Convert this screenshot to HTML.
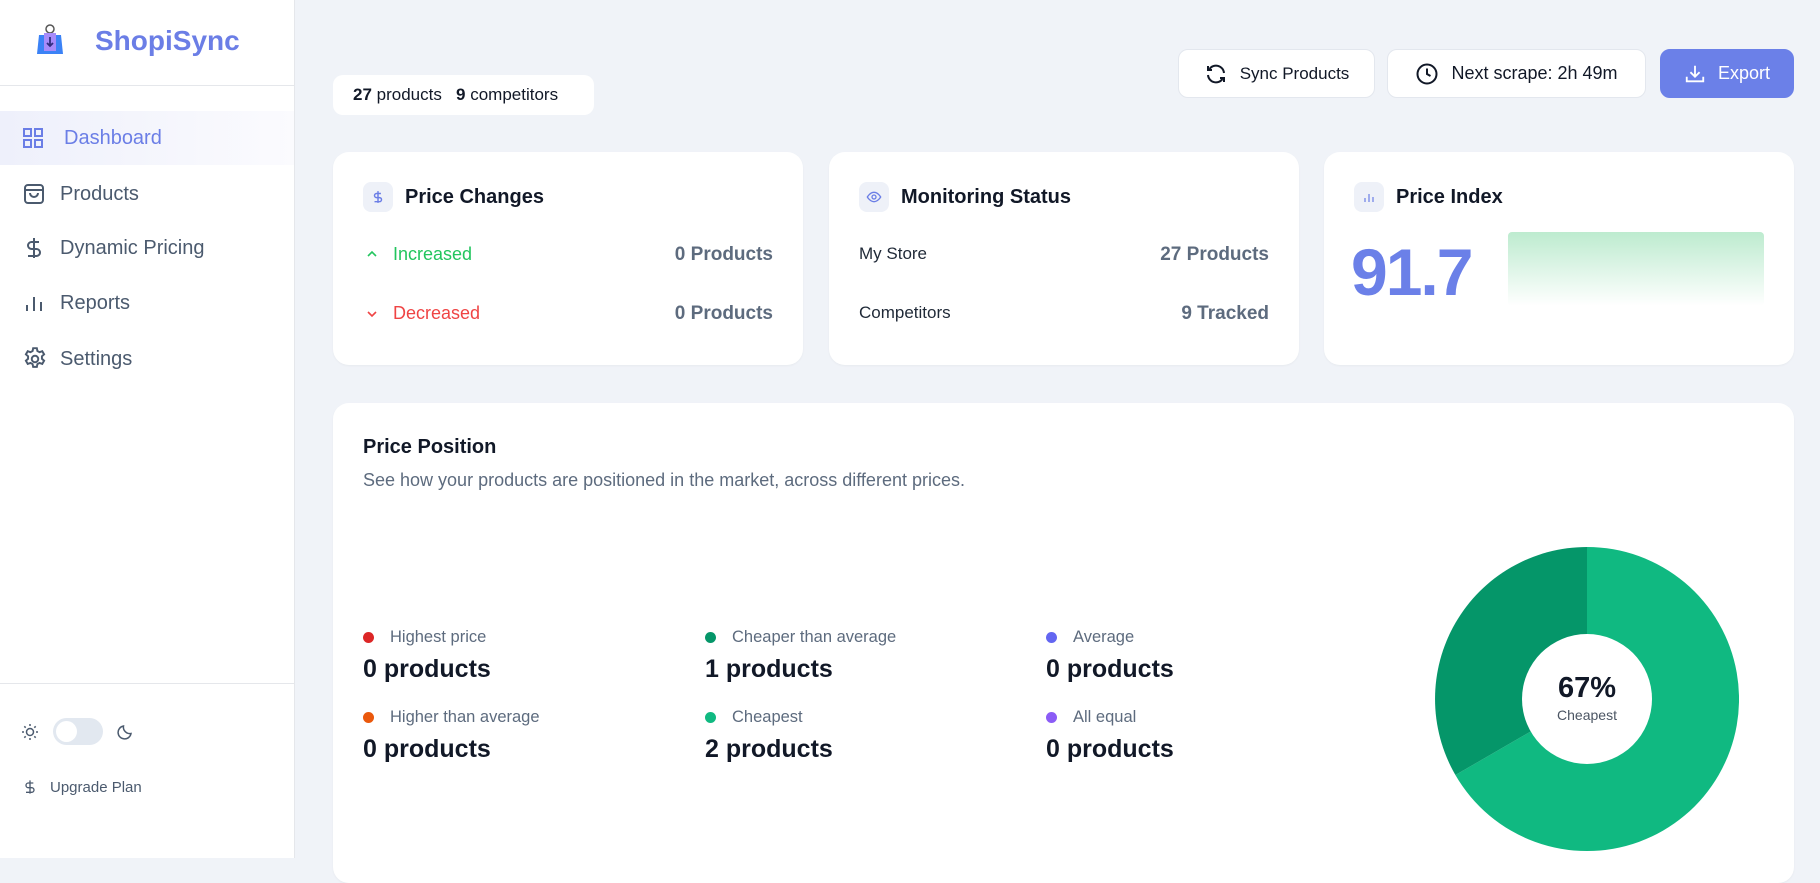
<!DOCTYPE html>
<html><head><meta charset="utf-8"><style>
*{box-sizing:border-box;margin:0;padding:0}
body{width:1820px;height:858px;overflow:hidden;background:#f0f3f8;font-family:"Liberation Sans",sans-serif;position:relative;color:#111827}
.abs{position:absolute}
.side{left:0;top:0;width:295px;height:858px;background:#fff;border-right:1px solid #e5e7eb}
.nav{position:absolute;left:0;width:294px;height:54px;display:flex;align-items:center;font-size:20px;color:#4b5a6e}
.nav svg{position:absolute;left:22px}
.nav span{position:absolute;left:60px}
.card{position:absolute;background:#fff;border-radius:16px;box-shadow:0 1px 2px rgba(0,0,0,.04)}
.btn{position:absolute;top:49px;height:49px;background:#fff;border:1px solid #e3e7ee;border-radius:10px;display:flex;align-items:center;justify-content:center;font-size:17px;color:#111827;gap:12px}
.ic{position:absolute;width:30px;height:30px;border-radius:8px;background:#eef1f8;display:flex;align-items:center;justify-content:center}
.ct{position:absolute;font-size:20px;font-weight:bold;color:#111827}
.row{position:absolute;font-size:18px}
.val{position:absolute;right:30px;font-size:19px;font-weight:bold;color:#5d6b7e}
.lg{position:absolute;font-size:16.5px;color:#5d6b7e}
.lg i{position:absolute;left:0;top:4px;width:11px;height:11px;border-radius:50%}
.lg span{position:absolute;left:27px;white-space:nowrap}
.lv{position:absolute;font-size:25px;font-weight:bold;color:#111827;white-space:nowrap}
</style></head><body>
<div class="abs side">
  <svg class="abs" style="left:36px;top:22px" width="28" height="34" viewBox="0 0 28 34"><circle cx="14" cy="7" r="4" fill="none" stroke="#555" stroke-width="1.5"/><path d="M3 13h22l2 19H1z" fill="#3b82f6"/><path d="M8 11h12v18H8z" fill="#a78bfa"/><path d="M14 15v9m-3-3l3 3 3-3" stroke="#312e81" stroke-width="1.8" fill="none"/></svg>
  <div class="abs" style="left:95px;top:25px;font-size:28px;font-weight:bold;color:#6b7ee6">ShopiSync</div>
  <div class="abs" style="left:0;top:85px;width:294px;height:1px;background:#e5e7eb"></div>
  <div class="nav" style="top:111px;background:linear-gradient(90deg,#eef0fb,#fbfbfe);color:#6b7ee6">
    <svg width="22" height="22" viewBox="0 0 22 22" fill="none" stroke="#6b7ee6" stroke-width="2"><rect x="2" y="2" width="7" height="7"/><rect x="13" y="2" width="7" height="7"/><rect x="2" y="13" width="7" height="7"/><rect x="13" y="13" width="7" height="7"/></svg>
    <span style="left:64px">Dashboard</span></div>
  <div class="nav" style="top:167px"><svg width="24" height="24" viewBox="0 0 24 24" fill="none" stroke="#4b5a6e" stroke-width="2"><rect x="3" y="3" width="18" height="18" rx="3"/><path d="M3 8h18M8 11a4 4 0 008 0"/></svg><span>Products</span></div>
  <div class="nav" style="top:221px"><svg width="24" height="24" viewBox="0 0 24 24" fill="none" stroke="#4b5a6e" stroke-width="2"><path d="M12 2v20M17 6H9.5a3.5 3.5 0 000 7h5a3.5 3.5 0 010 7H6"/></svg><span>Dynamic Pricing</span></div>
  <div class="nav" style="top:276px"><svg width="24" height="24" viewBox="0 0 24 24" fill="none" stroke="#4b5a6e" stroke-width="2"><path d="M5 20v-6M12 20V6M19 20v-9"/></svg><span>Reports</span></div>
  <div class="nav" style="top:332px"><svg width="26" height="26" viewBox="0 0 24 24" fill="none" stroke="#4b5a6e" stroke-width="1.8"><circle cx="12" cy="12" r="3"/><path d="M10.3 2h3.4l.5 2.6 2 1.1 2.5-.9 1.700 2.9-2 1.8v2.3l2 1.8-1.7 2.9-2.5-.9-2 1.1-.5 2.6h-3.4l-.5-2.6-2-1.1-2.5.9-1.7-2.9 2-1.8v-2.3l-2-1.8 1.7-2.9 2.5.9 2-1.1z"/></svg><span>Settings</span></div>
  <div class="abs" style="left:0;top:683px;width:294px;height:1px;background:#e5e7eb"></div>
  <svg class="abs" style="left:21px;top:723px" width="18" height="18" viewBox="0 0 18 18" fill="none" stroke="#4b5a6e" stroke-width="1.5"><circle cx="9" cy="9" r="3.5"/><path d="M9 1v2M9 15v2M1 9h2M15 9h2M3.3 3.3l1.4 1.4M13.3 13.3l1.4 1.4M3.3 14.7l1.4-1.4M13.3 4.7l1.4-1.4"/></svg>
  <div class="abs" style="left:53px;top:718px;width:50px;height:27px;border-radius:14px;background:#e2e8f0"><div class="abs" style="left:3px;top:3px;width:21px;height:21px;border-radius:50%;background:#fff"></div></div>
  <svg class="abs" style="left:116px;top:723px" width="18" height="18" viewBox="0 0 18 18" fill="none" stroke="#4b5a6e" stroke-width="1.5"><path d="M15 10.5A6.5 6.5 0 017.5 3a6.5 6.5 0 107.5 7.5z"/></svg>
  <svg class="abs" style="left:22px;top:778px" width="16" height="18" viewBox="0 0 24 24" fill="none" stroke="#4b5a6e" stroke-width="2"><path d="M12 2v20M17 6H9.5a3.5 3.5 0 000 7h5a3.5 3.5 0 010 7H6"/></svg>
  <div class="abs" style="left:50px;top:779px;font-size:15px;color:#4b5a6e">Upgrade Plan</div>
</div>

<div class="abs" style="left:333px;top:75px;width:261px;height:40px;background:#fff;border-radius:10px;font-size:17px;color:#111827;padding:10px 0 0 20px;white-space:nowrap"><b>27</b> products &nbsp;&nbsp;<b>9</b> competitors</div>

<div class="btn" style="left:1178px;width:197px"><svg width="24" height="24" viewBox="0 0 24 24" fill="none" stroke="#111827" stroke-width="2"><path d="M20 11a8 8 0 00-14.5-4M4 4v4h4M4 13a8 8 0 0014.5 4M20 20v-4h-4"/></svg>Sync Products</div>
<div class="btn" style="left:1387px;width:259px;font-size:18px"><svg width="24" height="24" viewBox="0 0 24 24" fill="none" stroke="#111827" stroke-width="2"><circle cx="12" cy="12" r="9.5"/><path d="M12 6.5V12l3.5 2"/></svg>Next scrape: 2h 49m</div>
<div class="btn" style="left:1660px;width:134px;background:#6b80e8;border-color:#6b80e8;color:#fff;font-size:18px"><svg width="22" height="22" viewBox="0 0 24 24" fill="none" stroke="#fff" stroke-width="2"><path d="M12 3v12M7 10l5 5 5-5M3 15v5h18v-5"/></svg>Export</div>

<div class="card" style="left:333px;top:152px;width:470px;height:213px">
  <div class="ic" style="left:30px;top:30px"><svg width="14" height="14" viewBox="0 0 24 24" fill="none" stroke="#6b7ee6" stroke-width="2.5"><path d="M12 2v20M17 6H9.5a3.5 3.5 0 000 7h5a3.5 3.5 0 010 7H6"/></svg></div>
  <div class="ct" style="left:72px;top:34px">Price Changes</div>
  <svg class="abs" style="left:33px;top:96px" width="12" height="12" viewBox="0 0 12 12"><path d="M2 8l4-4 4 4" stroke="#22c55e" stroke-width="1.6" fill="none"/></svg>
  <div class="row" style="left:60px;top:92px;color:#22c55e">Increased</div>
  <div class="val" style="top:92px">0 Products</div>
  <svg class="abs" style="left:33px;top:156px" width="12" height="12" viewBox="0 0 12 12"><path d="M2 4l4 4 4-4" stroke="#ef4444" stroke-width="1.6" fill="none"/></svg>
  <div class="row" style="left:60px;top:151px;color:#ef4444">Decreased</div>
  <div class="val" style="top:151px">0 Products</div>
</div>
<div class="card" style="left:829px;top:152px;width:470px;height:213px">
  <div class="ic" style="left:30px;top:30px"><svg width="16" height="16" viewBox="0 0 24 24" fill="none" stroke="#6b7ee6" stroke-width="2"><path d="M2 12s4-7 10-7 10 7 10 7-4 7-10 7S2 12 2 12z"/><circle cx="12" cy="12" r="3"/></svg></div>
  <div class="ct" style="left:72px;top:34px">Monitoring Status</div>
  <div class="row" style="left:30px;top:92px;color:#1f2937;font-size:17px">My Store</div>
  <div class="val" style="top:92px">27 Products</div>
  <div class="row" style="left:30px;top:151px;color:#1f2937;font-size:17px">Competitors</div>
  <div class="val" style="top:151px">9 Tracked</div>
</div>
<div class="card" style="left:1324px;top:152px;width:470px;height:213px">
  <div class="ic" style="left:30px;top:30px"><svg width="12" height="12" viewBox="0 0 12 12" stroke="#6b7ee6" stroke-width="1.2"><path d="M2 11V7M6 11V3M10 11V6"/></svg></div>
  <div class="ct" style="left:72px;top:34px">Price Index</div>
  <div class="abs" style="left:27px;top:82px;font-size:66px;font-weight:bold;color:#6b80e8;letter-spacing:-2px">91.7</div>
  <div class="abs" style="left:184px;top:80px;width:256px;height:74px;border-radius:4px;background:linear-gradient(#bdebcf,#fff)"></div>
</div>

<div class="card" style="left:333px;top:403px;width:1461px;height:480px">
  <div class="ct" style="left:30px;top:33px">Price Position</div>
  <div class="abs" style="left:30px;top:67px;font-size:18px;color:#5d6b7e">See how your products are positioned in the market, across different prices.</div>
  <div class="lg" style="left:30px;top:225px"><i style="background:#dc2626"></i><span>Highest price</span></div>
  <div class="lv" style="left:30px;top:252px">0 products</div>
  <div class="lg" style="left:30px;top:305px"><i style="background:#ea580c"></i><span>Higher than average</span></div>
  <div class="lv" style="left:30px;top:332px">0 products</div>
  <div class="lg" style="left:372px;top:225px"><i style="background:#059669"></i><span>Cheaper than average</span></div>
  <div class="lv" style="left:372px;top:252px">1 products</div>
  <div class="lg" style="left:372px;top:305px"><i style="background:#10b981"></i><span>Cheapest</span></div>
  <div class="lv" style="left:372px;top:332px">2 products</div>
  <div class="lg" style="left:713px;top:225px"><i style="background:#6366f1"></i><span>Average</span></div>
  <div class="lv" style="left:713px;top:252px">0 products</div>
  <div class="lg" style="left:713px;top:305px"><i style="background:#8b5cf6"></i><span>All equal</span></div>
  <div class="lv" style="left:713px;top:332px">0 products</div>
  <svg class="abs" style="left:1102px;top:144px" width="304" height="304" viewBox="-152 -152 304 304">
    <path d="M0-152A152 152 0 1 1 -131.6 76L0 0z" fill="#10b981"/>
    <path d="M-131.6 76A152 152 0 0 1 0 -152L0 0z" fill="#059669"/>
    <circle r="65" fill="#fff"/>
    <text y="-2" text-anchor="middle" font-family="Liberation Sans" font-weight="bold" font-size="29" fill="#111827">67%</text>
    <text y="21" text-anchor="middle" font-family="Liberation Sans" font-size="14" fill="#4b5563">Cheapest</text>
  </svg>
</div>
</body></html>
